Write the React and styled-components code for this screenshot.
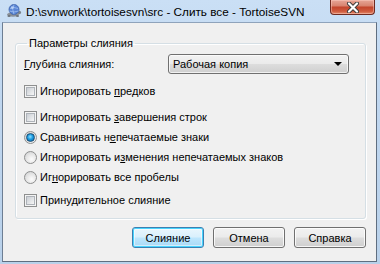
import React from "react";
import styled, { createGlobalStyle } from "styled-components";

const Global = createGlobalStyle`
  body {
    margin: 0;
    background: #fff;
  }
  * {
    box-sizing: border-box;
  }
`;

const Window = styled.div`
  width: 380px;
  height: 264px;
  display: flex;
  flex-direction: column;
  padding: 0 3px 2px 2px;
  background: linear-gradient(to bottom, #cadff5 0%, #bfd6ef 40%, #b9d1ea 100%);
  font-family: "Liberation Sans", Arial, sans-serif;
  font-size: 11px;
  color: #000;
`;

const TitleBar = styled.div`
  height: 22px;
  display: flex;
  align-items: flex-start;
  position: relative;
`;

const AppIcon = styled.svg`
  width: 16px;
  height: 16px;
  margin: 3px 0 0 4px;
  flex-shrink: 0;
`;

const Title = styled.div`
  margin: 5px 0 0 4px;
  font-size: 11.75px;
  line-height: 14px;
  white-space: nowrap;
`;

const CloseButton = styled.div`
  position: absolute;
  right: 2px;
  top: 0;
  width: 45px;
  height: 15px;
  border: 1px solid #6e2a20;
  border-top: none;
  border-radius: 0 0 4px 4px;
  background: linear-gradient(to bottom, #e7a697 0%, #d98571 40%, #c3462d 52%, #cf5a3d 80%, #e28a6c 100%);
  box-shadow: inset 0 0 0 1px rgba(255, 210, 200, 0.45);
  display: flex;
  align-items: center;
  justify-content: center;
`;

const Client = styled.div`
  flex: 1;
  display: flex;
  flex-direction: column;
  background: #f0f0f0;
  border: 1px solid #5f6e80;
  border-color: #8fa3bb #5f6e80 #5f6e80 #6d7e93;
`;

const Group = styled.fieldset`
  margin: 13px 10px 0 12px;
  padding: 3px 8px 8px 8px;
  border: 1px solid #d5dfe5;
  border-radius: 3px;
  box-shadow: inset 1px 1px 0 #fff, 1px 1px 0 #fff;
  display: flex;
  flex-direction: column;
  min-width: 0;
`;

const Legend = styled.legend`
  padding: 0 2px;
  margin-left: 3px;
  line-height: 15px;
`;

const DepthRow = styled.div`
  display: flex;
  align-items: center;
  justify-content: space-between;
  height: 20px;
  padding-right: 8px;
`;

const Combo = styled.div`
  width: 181px;
  height: 20px;
  border: 1px solid #707070;
  border-radius: 3px;
  background: linear-gradient(to bottom, #f2f2f2 0%, #ebebeb 48%, #dddddd 52%, #cfcfcf 100%);
  box-shadow: inset 0 0 0 1px rgba(255, 255, 255, 0.7);
  display: flex;
  align-items: center;
  justify-content: space-between;
  padding: 0 6px 0 4px;
`;

const Arrow = styled.span`
  width: 0;
  height: 0;
  border-left: 4px solid transparent;
  border-right: 4px solid transparent;
  border-top: 4px solid #000;
`;

const Option = styled.label`
  display: flex;
  align-items: center;
  gap: 3px;
  height: 20px;
  margin-top: ${(p) => p.$gap || 0}px;
  white-space: nowrap;
`;

const Box = styled.span`
  width: 13px;
  height: 13px;
  flex-shrink: 0;
  border: 1px solid #8e8f8f;
  background: #f4f4f4;
  padding: 1px;
  display: flex;
  &::after {
    content: "";
    flex: 1;
    border: 1px solid #aeb3b9;
    background: linear-gradient(135deg, #cbcfd5 0%, #e4e6e8 60%, #f6f6f6 100%);
  }
`;

const Radio = styled.span`
  width: 13px;
  height: 13px;
  flex-shrink: 0;
  border-radius: 50%;
  border: 1px solid #8e8f8f;
  background: radial-gradient(circle at 60% 65%, #fcfcfc 0%, #e6e6e6 50%, #c9cbcd 100%);
  display: flex;
  align-items: center;
  justify-content: center;
  &::after {
    content: "";
    display: ${(p) => (p.$checked ? "block" : "none")};
    width: 7px;
    height: 7px;
    border-radius: 50%;
    border: 1px solid #1a4e74;
    background: radial-gradient(circle at 45% 40%, #8fe0ff 0%, #1b9be0 45%, #0b5c9e 100%);
  }
`;

const Buttons = styled.div`
  display: flex;
  justify-content: flex-end;
  gap: 9px;
  margin: 8px 10px 0 0;
`;

const Button = styled.div`
  width: 72px;
  height: 21px;
  border: 1px solid ${(p) => (p.$default ? "#3c7fb1" : "#707070")};
  border-radius: 3px;
  background: ${(p) =>
    p.$default
      ? "linear-gradient(to bottom, #eaf6fd 0%, #d9f0fc 48%, #bee6fd 52%, #a7d9f5 100%)"
      : "linear-gradient(to bottom, #f2f2f2 0%, #ebebeb 48%, #dddddd 52%, #cfcfcf 100%)"};
  box-shadow: ${(p) =>
    p.$default
      ? "inset 0 0 0 1px #48d4fe, inset 0 0 0 2px rgba(255,255,255,0.5)"
      : "inset 0 0 0 1px rgba(255,255,255,0.8)"};
  display: flex;
  align-items: center;
  justify-content: center;
`;

const options = [
  { type: "box", gap: 7, text: ["Игнорировать ", "п", "редков"] },
  { type: "box", gap: 6, text: ["Игнорировать ", "з", "авершения строк"] },
  { type: "radio", checked: true, text: ["Сравнивать н", "е", "печатаемые знаки"] },
  { type: "radio", text: ["Игнорировать и", "з", "менения непечатаемых знаков"] },
  { type: "radio", text: ["Иг", "н", "орировать все пробелы"] },
  { type: "box", gap: 3, text: ["Прину", "д", "ительное слияние"] },
];

export default function App() {
  return (
    <Window>
      <Global />
      <TitleBar>
        <AppIcon viewBox="0 0 16 16">
          <ellipse cx="7" cy="11.5" rx="6" ry="2.2" fill="#8a9098" />
          <ellipse cx="3" cy="13" rx="1.6" ry="1" fill="#6d737a" />
          <ellipse cx="11.5" cy="13" rx="1.6" ry="1" fill="#6d737a" />
          <circle cx="13.3" cy="9.5" r="1.8" fill="#7b828a" />
          <circle cx="8" cy="6.5" r="5" fill="#5b86d6" stroke="#3a5fa8" strokeWidth="0.8" />
          <path d="M4 5.5 Q8 3.5 12 5.5 M3.4 8 Q8 10 12.6 8 M8 1.6 Q5.5 6.5 8 11.4" stroke="#a8c6f2" strokeWidth="0.7" fill="none" />
          <circle cx="6.3" cy="4.6" r="1.3" fill="#c9dcfa" opacity="0.8" />
        </AppIcon>
        <Title>D:\svnwork\tortoisesvn\src - Слить все - TortoiseSVN</Title>
        <CloseButton>
          <svg width="14" height="11" viewBox="0 0 14 11">
            <path d="M3 1.5 L11 9.5 M11 1.5 L3 9.5" stroke="#3b3b3b" strokeWidth="4" strokeLinecap="round" />
            <path d="M3 1.5 L11 9.5 M11 1.5 L3 9.5" stroke="#fff" strokeWidth="2.2" strokeLinecap="round" />
          </svg>
        </CloseButton>
      </TitleBar>
      <Client>
        <Group>
          <Legend>Параметры слияния</Legend>
          <DepthRow>
            <span>
              <u>Г</u>лубина слияния:
            </span>
            <Combo>
              <span>Рабочая копия</span>
              <Arrow />
            </Combo>
          </DepthRow>
          {options.map((o, i) => (
            <Option key={i} $gap={o.gap}>
              {o.type === "box" ? <Box /> : <Radio $checked={o.checked} />}
              <span>
                {o.text[0]}
                <u>{o.text[1]}</u>
                {o.text[2]}
              </span>
            </Option>
          ))}
        </Group>
        <Buttons>
          <Button $default>Слияние</Button>
          <Button>Отмена</Button>
          <Button>Справка</Button>
        </Buttons>
      </Client>
    </Window>
  );
}
